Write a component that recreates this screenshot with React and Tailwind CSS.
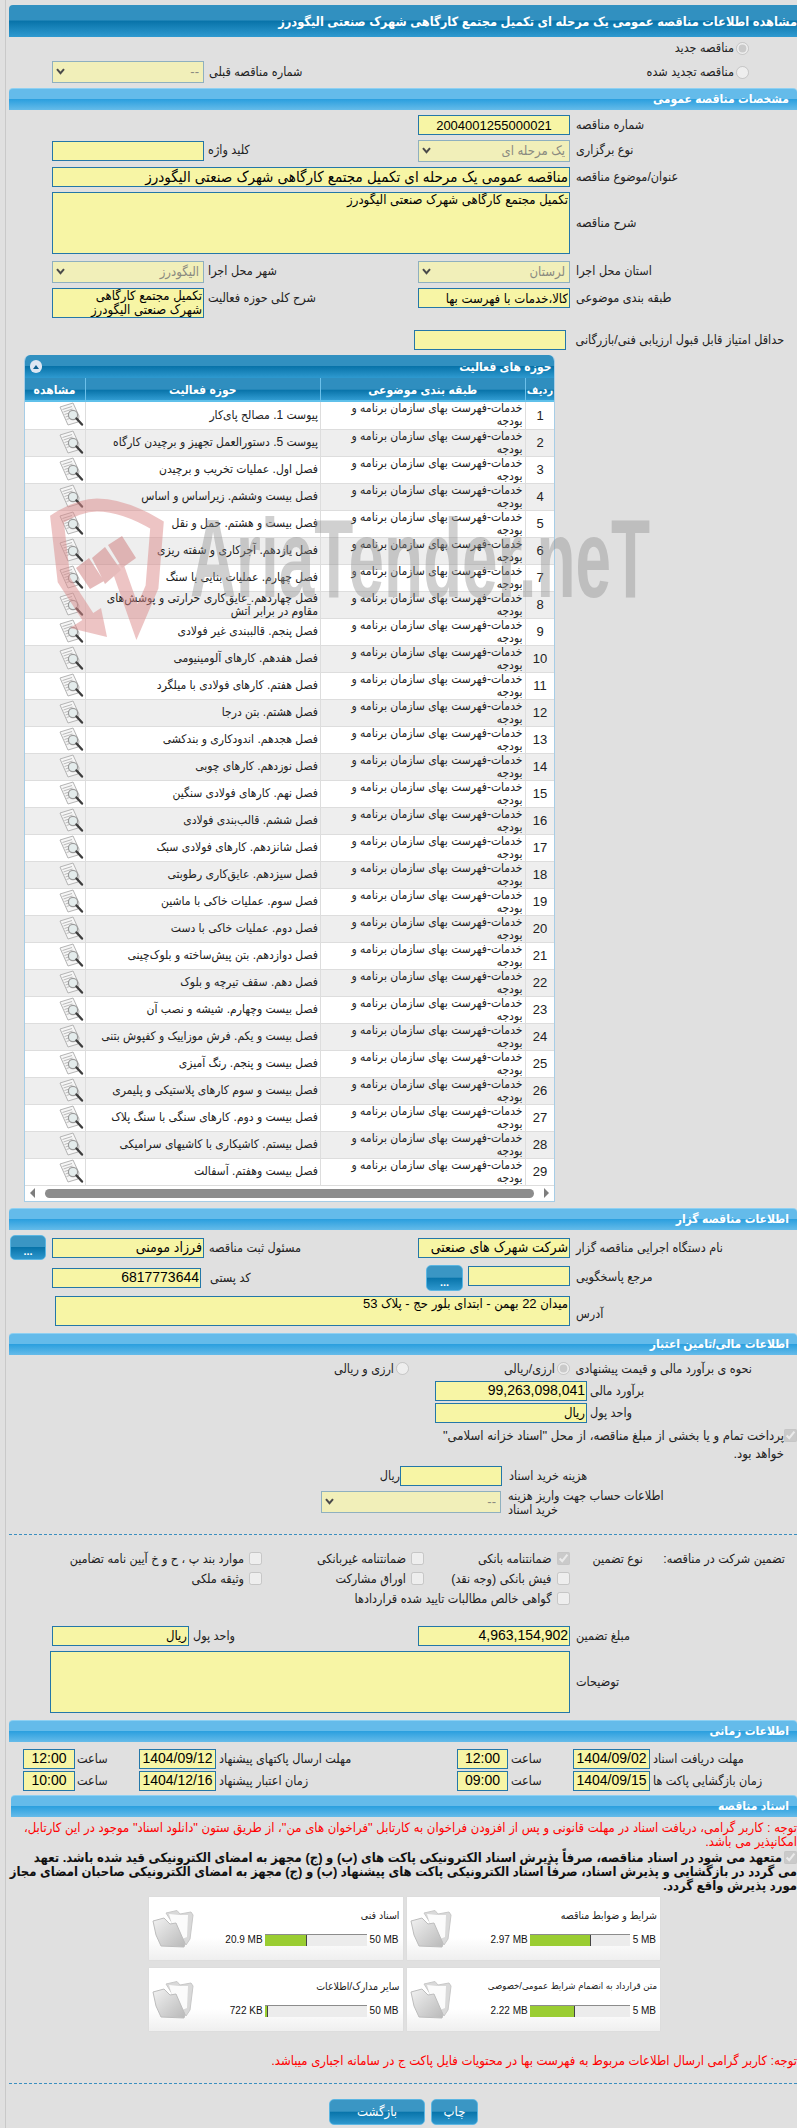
import React from "react";

const ROWS = [
  "پیوست 1. مصالح پای‌کار",
  "پیوست 5. دستورالعمل تجهیز و برچیدن کارگاه",
  "فصل اول. عملیات تخریب و برچیدن",
  "فصل بیست وششم. زیراساس و اساس",
  "فصل بیست و هشتم. حمل و نقل",
  "فصل یازدهم. آجرکاری و شفته ریزی",
  "فصل چهارم. عملیات بنایی با سنگ",
  "فصل چهاردهم. عایق‌کاری حرارتی و پوشش‌های مقاوم در برابر آتش",
  "فصل پنجم. قالببندی غیر فولادی",
  "فصل هفدهم. کارهای آلومینیومی",
  "فصل هفتم. کارهای فولادی با میلگرد",
  "فصل هشتم. بتن درجا",
  "فصل هجدهم. اندودکاری و بندکشی",
  "فصل نوزدهم. کارهای چوبی",
  "فصل نهم. کارهای فولادی سنگین",
  "فصل ششم. قالب‌بندی فولادی",
  "فصل شانزدهم. کارهای فولادی سبک",
  "فصل سیزدهم. عایق‌کاری رطوبتی",
  "فصل سوم. عملیات خاکی با ماشین",
  "فصل دوم. عملیات خاکی با دست",
  "فصل دوازدهم. بتن پیش‌ساخته و بلوک‌چینی",
  "فصل دهم. سقف تیرچه و بلوک",
  "فصل بیست وچهارم. شیشه و نصب آن",
  "فصل بیست و یکم. فرش موزاییک و کفپوش بتنی",
  "فصل بیست و پنجم. رنگ آمیزی",
  "فصل بیست و سوم کارهای پلاستیکی و پلیمری",
  "فصل بیست و دوم. کارهای سنگی با سنگ پلاک",
  "فصل بیستم. کاشیکاری با کاشیهای سرامیکی",
  "فصل بیست وهفتم. آسفالت",
];

const fieldClass =
  "block border border-[#2477a8] bg-[#f7f5a5] text-black outline-none px-px";

function Input({ value = "", className = "", center }) {
  return (
    <input
      readOnly
      dir="rtl"
      value={value}
      className={`${fieldClass} h-5 ${center ? "text-center" : ""} ${className.includes("text-[") ? "" : "text-[13px]"} ${className}`}
    />
  );
}

function Area({ value = "", className = "" }) {
  return (
    <textarea
      readOnly
      dir="rtl"
      value={value}
      className={`${fieldClass} resize-none overflow-hidden text-[13px] leading-[14px] ${className}`}
    />
  );
}

function Select({ value, className = "w-[152px]" }) {
  return (
    <span className={`relative block h-[22px] ${className}`}>
      <select
        disabled
        dir="rtl"
        className="block h-[22px] w-full appearance-none border border-[#8fb0bf] bg-[#f1efb9] pr-1 text-[13px] text-[#8a8a80]"
      >
        <option>{value}</option>
      </select>
      <svg width="9" height="7" viewBox="0 0 9 7" className="absolute left-[4px] top-[7px]">
        <path d="M1 1.2 4.5 5.2 8 1.2" fill="none" stroke="#4a4a4a" strokeWidth="2" />
      </svg>
    </span>
  );
}

function Label({ children, className = "" }) {
  return (
    <span dir="rtl" className={`block w-max text-[12.5px] leading-5 text-[#222] ${className}`}>
      {children}
    </span>
  );
}

function Section({ title, className = "" }) {
  return (
    <div
      dir="rtl"
      className={`h-[22px] rounded-t-[4px] border-t border-[#8ed0f2] bg-[linear-gradient(to_bottom,#64bbea_0%,#64bbea_48%,#2ca0df_50%,#65bbe9_100%)] pr-2 text-[12px] font-bold leading-[20px] text-white ${className}`}
    >
      {title}
    </div>
  );
}

function Grid({ left, leftLabel, right, rightLabel, className = "" }) {
  return (
    <div className={`grid grid-cols-[152px_214px_152px_1fr] pl-[43px] ${className}`}>
      <div>{left}</div>
      <div>{leftLabel && <Label className="ml-1">{leftLabel}</Label>}</div>
      <div>{right}</div>
      <div>{rightLabel && <Label className="ml-[6px]">{rightLabel}</Label>}</div>
    </div>
  );
}

function Radio({ checked, children }) {
  return (
    <span className="flex items-center gap-[2px]">
      <span dir="rtl" className="text-[12.5px] leading-5 text-[#222]">{children}</span>
      <input type="radio" disabled checked={!!checked} readOnly className="m-0 size-[13px]" />
    </span>
  );
}

function Check({ checked, children }) {
  return (
    <span className="flex items-center gap-[5px]">
      <input type="checkbox" disabled checked={!!checked} readOnly className="m-0 size-[13px] shrink-0" />
      <span className="whitespace-nowrap text-[12.5px] leading-5 text-[#222]">{children}</span>
    </span>
  );
}

function BlueButton({ children, className = "" }) {
  return (
    <button
      type="button"
      className={`rounded-[5px] border border-[#5cb6e2] bg-[linear-gradient(to_bottom,#3a96c4_0%,#3a96c4_47%,#0874aa_50%,#2e97cd_100%)] text-white ${className}`}
    >
      {children}
    </button>
  );
}

function ViewIcon() {
  return (
    <svg width="25" height="25" viewBox="0 0 25 25" className="block">
      <path d="M1 5 14 1l6 13-1 6-10 3z" fill="#f6f6f6" stroke="#b4b4b4" strokeWidth="1" />
      <path d="M3.5 7.5 13 4.5M4.5 10l9-3M5.5 12.5l4-1.3M6.5 15l3-1M7.5 17.5l3-1" stroke="#b9b9b9" strokeWidth="1" />
      <circle cx="14" cy="13" r="4.6" fill="#e4ecec" stroke="#9a9a9a" strokeWidth="1.2" />
      <path d="m17.5 16.5 5.5 6" stroke="#3d3d3d" strokeWidth="2.4" strokeLinecap="round" />
    </svg>
  );
}

function FolderIcon() {
  return (
    <svg width="42" height="38" viewBox="0 0 42 38" className="block">
      <defs>
        <linearGradient id="folderBack" x1="0" y1="0" x2="1" y2="1">
          <stop offset="0" stopColor="#f2f2f2" />
          <stop offset="1" stopColor="#b9b9b9" />
        </linearGradient>
      </defs>
      <path d="M14 3 25 .5l3 3.5 11-2 2 3-3 24-4 6z" fill="#d9d9d9" stroke="#c8c8c8" />
      <path d="M17 4 27 5l9 0-1 22-10 4z" fill="#fbfbfb" />
      <path d="M1 11 12 8l6 6 6-1 9 20.5-1 3.5-23-1L4 25z" fill="url(#folderBack)" stroke="#bdbdbd" />
    </svg>
  );
}

function DocCard({ title, used, max, fill, barClass, titleClass = "text-[10.5px]" }) {
  return (
    <div className="flex h-[63px] w-[253.5px] bg-[linear-gradient(to_bottom,#ffffff_0%,#ffffff_65%,#efefef_100%)] shadow-[0_0_1px_#cccccc]">
      <div className="ml-[3px] mt-[13px]">
        <FolderIcon />
      </div>
      <div className="flex flex-1 flex-col">
        <div dir="rtl" className={`mt-[11px] h-[14px] pr-[3px] leading-[14px] whitespace-nowrap text-[#222] ${titleClass}`}>{title}</div>
        <div className="mt-[12px] flex items-center justify-end pr-1 text-[10px] leading-3 text-[#111]">
          <span className="mr-[2px] whitespace-nowrap">{used}</span>
          <span className={`h-3 border-t border-[#8c8c8c] bg-[#ececec] ${barClass}`}>
            <span className="block h-[11px] border-r border-[#444] bg-[#9acd32]" style={{ width: fill }} />
          </span>
          <span className="ml-[3px] whitespace-nowrap">{max}</span>
        </div>
      </div>
    </div>
  );
}

function Watermark() {
  return (
    <div className="pointer-events-none absolute left-[45px] top-[495px] h-[150px] w-[620px]">
      <svg width="125" height="150" viewBox="0 0 125 150" className="absolute left-0 top-0 opacity-50">
        <path
          d="M47 128 19 85 12 24C28 14 40 10 52 10 72 10 92 18 112 30L107 92 92 127 72 70"
          fill="none"
          stroke="#dc8a8a"
          strokeWidth="13"
        />
        <path d="M25 133 62 142 56 113z" fill="#dc8a8a" />
        <path d="M63 50 77 41 91 63 77 73zM47 63 60 52 76 75 60 89zM31 73 44 63 59 86 45 94z" fill="#cf7a7a" />
      </svg>
      <div className="absolute left-[145px] top-[4px] origin-top-left scale-x-[0.57] whitespace-nowrap text-[112px] font-bold leading-[120px] text-[#8c8c8c] opacity-40">
        AriaTender.neT
      </div>
    </div>
  );
}

export default function App() {
  return (
    <div className="relative min-h-[2128px] w-[797px] overflow-hidden bg-[#e0e0e0] pl-[5px] font-['Liberation_Sans','DejaVu_Sans_Condensed',sans-serif]">
      <div className="min-h-[2128px] border-l border-[#c9c9c9] pl-[3px]">
        <div className="pt-[5px]">
          <div
            dir="rtl"
            className="h-8 overflow-hidden rounded-tl-[4px] bg-[linear-gradient(to_bottom,#3190c0_0%,#3190c0_47%,#0873a9_50%,#2f9ad0_100%)] text-[12.7px] font-bold leading-[34px] whitespace-nowrap text-white"
          >
            مشاهده اطلاعات مناقصه عمومی یک مرحله ای تکمیل مجتمع کارگاهی شهرک صنعتی الیگودرز
          </div>
        </div>

        <div className="mt-[1px] flex h-5 justify-end pr-[48px]">
          <Radio checked>مناقصه جدید</Radio>
        </div>

        <div className="mt-[3px] flex h-[22px] items-center pl-[43px] pr-[48px]">
          <Select value="--" />
          <Label className="ml-[5px]">شماره مناقصه قبلی</Label>
          <span className="ml-auto">
            <Radio>مناقصه تجدید شده</Radio>
          </span>
        </div>

        <Section title="مشخصات مناقصه عمومی" className="mt-[5px]" />

        <Grid
          className="mt-[5px]"
          right={<Input value="2004001255000021" center className="w-full" />}
          rightLabel="شماره مناقصه"
        />
        <Grid
          className="mt-[5px]"
          left={<Input className="mt-px w-full" />}
          leftLabel="کلید واژه"
          right={<Select value="یک مرحله ای" className="w-full" />}
          rightLabel="نوع برگزاری"
        />
        <div className="mt-[5px] flex pl-[43px]">
          <Input
            className="w-[518px] text-[15px]"
            value="مناقصه عمومی یک مرحله ای تکمیل مجتمع کارگاهی شهرک صنعتی الیگودرز"
          />
          <Label className="ml-[6px]">عنوان/موضوع مناقصه</Label>
        </div>
        <div className="mt-[5px] flex items-center pl-[43px]">
          <Area className="h-[62px] w-[518px]" value="تکمیل مجتمع کارگاهی شهرک صنعتی الیگودرز" />
          <Label className="ml-[6px]">شرح مناقصه</Label>
        </div>
        <Grid
          className="mt-[7px]"
          left={<Select value="الیگودرز" className="w-full" />}
          leftLabel="شهر محل اجرا"
          right={<Select value="لرستان" className="w-full" />}
          rightLabel="استان محل اجرا"
        />
        <Grid
          className="mt-[5px]"
          left={<Area className="h-[30px] w-full" value={"تکمیل مجتمع کارگاهی\nشهرک صنعتی الیگودرز"} />}
          leftLabel="شرح کلی حوزه فعالیت"
          right={<Input className="w-full" value="کالا،خدمات با فهرست بها" />}
          rightLabel="طبقه بندی موضوعی"
        />
        <div className="mt-[12px] flex items-center pl-[405px]">
          <Input className="w-[152px]" />
          <Label className="ml-[9.5px]">حداقل امتیاز قابل قبول ارزیابی فنی/بازرگانی</Label>
        </div>

        <div className="relative ml-[14.5px] mt-[5px] w-[531px] overflow-hidden rounded-t-[6px] border border-t-0 border-[#a7cde6] bg-white">
          <div
            dir="rtl"
            className="flex h-[23px] items-center justify-between bg-[linear-gradient(to_bottom,#3190c0_0%,#3190c0_47%,#0873a9_50%,#2f9ad0_100%)] pl-[5px] pr-[2px] text-[12px] font-bold text-white"
          >
            <span>حوزه های فعالیت</span>
            <span className="flex size-[12.5px] items-center justify-center rounded-full bg-[#dde6f2]">
              <span className="h-0 w-0 border-x-[3px] border-b-[4px] border-x-transparent border-b-[#0d5f90]" />
            </span>
          </div>
          <table dir="rtl" className="w-[530px] table-fixed border-collapse">
            <colgroup>
              <col className="w-[29.5px]" />
              <col className="w-[204.5px]" />
              <col className="w-[235.5px]" />
              <col className="w-[60.5px]" />
            </colgroup>
            <thead>
              <tr className="h-6 bg-[linear-gradient(to_bottom,#2f8ebf_0%,#2f8ebf_47%,#0873a9_50%,#2f9ad0_90%,#5fc0ea_92%)] text-[12px] font-bold text-white">
                <th className="whitespace-nowrap border-l border-[#6cc0ea] p-0 text-[11px] font-bold">ردیف</th>
                <th className="border-l border-[#6cc0ea] p-0 font-bold">طبقه بندی موضوعی</th>
                <th className="border-l border-[#6cc0ea] p-0 font-bold">حوزه فعالیت</th>
                <th className="p-0 font-bold">مشاهده</th>
              </tr>
            </thead>
            <tbody>
              {ROWS.map((activity, i) => (
                <tr key={i} className={`h-[27px] border-b border-[#dddddd] ${i % 2 ? "bg-[#eeeeee]" : "bg-white"}`}>
                  <td className="border-l border-[#dddddd] p-0 text-center text-[13px] leading-[13px] text-[#222]">{i + 1}</td>
                  <td className="border-l border-[#dddddd] p-0 pl-[24px] pr-[2px] text-[12px] leading-[13px] text-[#222]">
                    خدمات-فهرست بهای سازمان برنامه و بودجه
                  </td>
                  <td className="border-l border-[#dddddd] p-0 pl-[14px] pr-[2px] text-[12px] leading-[13px] text-[#222]">{activity}</td>
                  <td className="p-0">
                    <span className="block h-[26px] overflow-hidden pl-[34px]" dir="ltr">
                      <ViewIcon />
                    </span>
                  </td>
                </tr>
              ))}
            </tbody>
          </table>
          <div className="flex h-[15px] items-center px-[5px]">
            <span className="h-0 w-0 border-y-[5px] border-r-[5px] border-y-transparent border-r-[#7d7d7d]" />
            <span className="mx-[10px] h-[9px] flex-1 rounded-full bg-[#8c8c8c]" />
            <span className="h-0 w-0 border-y-[5px] border-l-[5px] border-y-transparent border-l-[#7d7d7d]" />
          </div>
        </div>

        <Section title="اطلاعات مناقصه گزار" className="mt-[6px]" />

        <div className="mt-[5px] flex pl-px">
          <BlueButton className="h-[25px] w-[36px] pt-2 text-[11px] font-bold leading-3">...</BlueButton>
          <div className="ml-[6px] mt-[3px]">
            <Input className="w-[152px] text-[14px]" value="فرزاد مومنی" />
          </div>
          <div className="mt-[3px] w-[214px]">
            <Label className="ml-[5px]">مسئول ثبت مناقصه</Label>
          </div>
          <div className="mt-[3px]">
            <Input className="w-[152px] text-[14px]" value="شرکت شهرک های صنعتی" />
          </div>
          <Label className="ml-[6px] mt-[3px]">نام دستگاه اجرایی مناقصه گزار</Label>
        </div>

        <div className="mt-[5px] flex pl-[43px]">
          <Input className="mt-[3px] w-[149px] text-[14px]" value="6817773644" />
          <div className="mt-[3px] w-[225px]">
            <Label className="ml-[9px]">کد پستی</Label>
          </div>
          <BlueButton className="h-[26px] w-[37px] pt-2 text-[11px] font-bold leading-3">...</BlueButton>
          <Input className="ml-[5px] mt-px w-[102px]" />
          <Label className="ml-[6px] mt-[2px]">مرجع پاسخگویی</Label>
        </div>

        <div className="mt-[5px] flex pl-[46px]">
          <Area className="h-[30px] w-[515px]" value="میدان 22 بهمن - ابتدای بلور حج - پلاک 53" />
          <Label className="ml-[6px] mt-[8px]">آدرس</Label>
        </div>

        <Section title="اطلاعات مالی/تامین اعتبار" className="mt-[7px]" />

        <div className="mt-[4px] flex h-5 items-center">
          <span className="flex w-[400px] justify-end">
            <Radio>ارزی و ریالی</Radio>
          </span>
          <span className="flex w-[161px] justify-end">
            <Radio checked>ارزی/ریالی</Radio>
          </span>
          <Label className="ml-[5.5px]">نحوه ی برآورد مالی و قیمت پیشنهادی</Label>
        </div>
        <div className="mt-[2px] flex pl-[426px]">
          <Input className="w-[152px] text-[14px]" value="99,263,098,041" />
          <Label className="ml-[3px]">برآورد مالی</Label>
        </div>
        <div className="mt-[2px] flex pl-[426px]">
          <Input className="w-[152px]" value="ریال" />
          <Label className="ml-[3px]">واحد پول</Label>
        </div>

        <div dir="rtl" className="mt-[4px] flex items-start">
          <input type="checkbox" disabled checked readOnly className="m-0 mt-[2px] size-[13px] shrink-0" />
          <p className="text-[13px] leading-[18px] text-[#222]">
            پرداخت تمام و یا بخشی از مبلغ مناقصه، از محل "اسناد خزانه اسلامی"
            <br />
            خواهد بود.
          </p>
        </div>

        <div className="mt-[3px] flex pl-[372px]">
          <span dir="rtl" className="w-[19px] text-[12.5px] leading-5 text-[#222]">ریال</span>
          <Input className="w-[102px]" />
          <Label className="ml-[7px]">هزینه خرید اسناد</Label>
        </div>
        <div className="mt-[3px] flex pl-[312px]">
          <Select value="--" className="mt-[2px] w-[180px]" />
          <span dir="rtl" className="ml-[7px] block w-[170px] text-left text-[12.5px] leading-[14px] text-[#222]">
            اطلاعات حساب جهت واریز هزینه خرید اسناد
          </span>
        </div>

        <div className="mt-[17px] border-t border-dashed border-[#3a8fc0]" />

        <div dir="rtl" className="mt-[14px] grid grid-cols-[142px_73.5px_145.5px_162px_1fr] pr-[12px]">
          <Label>تضمین شرکت در مناقصه:</Label>
          <Label>نوع تضمین</Label>
          <Check checked>ضمانتنامه بانکی</Check>
          <Check>ضمانتنامه غیربانکی</Check>
          <Check>موارد بند پ ، ح و خ آیین نامه تضامین</Check>
          <span className="col-start-3">
            <Check>فیش بانکی (وجه نقد)</Check>
          </span>
          <Check>اوراق مشارکت</Check>
          <Check>وثیقه ملکی</Check>
          <span className="col-span-3 col-start-3">
            <Check>گواهی خالص مطالبات تایید شده قراردادها</Check>
          </span>
        </div>

        <div className="mt-[17px] flex pl-[43px]">
          <Input className="w-[137px]" value="ریال" />
          <div className="w-[229px]">
            <Label className="ml-[4px]">واحد پول</Label>
          </div>
          <Input className="w-[152px] text-[14px]" value="4,963,154,902" />
          <Label className="ml-[6px]">مبلغ تضمین</Label>
        </div>
        <div className="mt-[5px] flex items-center pl-[41px]">
          <Area className="h-[62px] w-[520px]" />
          <Label className="ml-[6px]">توضیحات</Label>
        </div>

        <Section title="اطلاعات زمانی" className="mt-[7px]" />

        <div className="mt-[7px] flex pl-[14px]">
          <Input className="w-[52px] text-[14px]" value="12:00" center />
          <div className="w-[64px]"><Label className="ml-[2px]">ساعت</Label></div>
          <Input className="w-[77px] text-[14px]" value="1404/09/12" center />
          <div className="w-[241px]"><Label className="ml-[3px]">مهلت ارسال پاکتهای پیشنهاد</Label></div>
          <Input className="w-[51px] text-[14px]" value="12:00" center />
          <div className="w-[65px]"><Label className="ml-[3px]">ساعت</Label></div>
          <Input className="w-[77px] text-[14px]" value="1404/09/02" center />
          <Label className="ml-[3px]">مهلت دریافت اسناد</Label>
        </div>
        <div className="mt-[2px] flex pl-[14px]">
          <Input className="w-[52px] text-[14px]" value="10:00" center />
          <div className="w-[64px]"><Label className="ml-[2px]">ساعت</Label></div>
          <Input className="w-[77px] text-[14px]" value="1404/12/16" center />
          <div className="w-[241px]"><Label className="ml-[3px]">زمان اعتبار پیشنهاد</Label></div>
          <Input className="w-[51px] text-[14px]" value="09:00" center />
          <div className="w-[65px]"><Label className="ml-[3px]">ساعت</Label></div>
          <Input className="w-[77px] text-[14px]" value="1404/09/15" center />
          <Label className="ml-[3px]">زمان بازگشایی پاکت ها</Label>
        </div>

        <Section title="اسناد مناقصه" className="ml-[2px] mt-[4px]" />

        <p dir="rtl" className="mt-[4px] text-[13px] leading-[14px] text-[#ff0000]">
          توجه : کاربر گرامی، دریافت اسناد در مهلت قانونی و پس از افزودن فراخوان به کارتابل "فراخوان های من"، از طریق ستون "دانلود اسناد" موجود در این کارتابل،
          <br />
          امکانپذیر می باشد.
        </p>

        <div dir="rtl" className="mt-[2px] flex items-start">
          <input type="checkbox" disabled checked readOnly className="m-0 size-[13px] shrink-0" />
          <p className="mr-[2px] text-[13px] font-bold leading-[14px] text-[#111]">
            متعهد می شود در اسناد مناقصه، صرفاً پذیرش اسناد الکترونیکی پاکت های (ب) و (ج) مجهز به امضای الکترونیکی قید شده باشد. تعهد
          </p>
        </div>
        <p dir="rtl" className="text-[13px] font-bold leading-[14px] text-[#111]">
          می گردد در بازگشایی و پذیرش اسناد، صرفاً اسناد الکترونیکی پاکت های پیشنهاد (ب) و (ج) مجهز به امضای الکترونیکی صاحبان امضای مجاز مورد پذیرش واقع گردد.
        </p>

        <div className="mt-[4px] flex flex-col gap-2 pl-[140px]">
          <div className="flex gap-[4px]">
            <DocCard title="اسناد فنی" used="20.9 MB" max="50 MB" fill="42%" barClass="w-[102px]" />
            <DocCard title="شرایط و ضوابط مناقصه" used="2.97 MB" max="5 MB" fill="61%" barClass="w-[100px]" />
          </div>
          <div className="flex gap-[4px]">
            <DocCard title="سایر مدارک/اطلاعات" used="722 KB" max="50 MB" fill="3%" barClass="w-[102px]" />
            <DocCard title="متن قرارداد به انضمام شرایط عمومی/خصوصی" used="2.22 MB" max="5 MB" fill="45.5%" barClass="w-[100px]" titleClass="text-[9.5px]" />
          </div>
        </div>

        <p dir="rtl" className="mt-[22px] text-[13px] leading-4 text-[#ff0000]">
          توجه: کاربر گرامی ارسال اطلاعات مربوط به فهرست بها در محتویات فایل پاکت ج در سامانه اجباری میباشد.
        </p>

        <div className="mt-[14px] border-t border-dashed border-[#3a8fc0]" />

        <div className="mt-[15px] flex gap-[6px] pl-[320px]">
          <BlueButton className="h-[26px] w-[96px] text-[13px]">بازگشت</BlueButton>
          <BlueButton className="h-[26px] w-[47px] text-[13px]">چاپ</BlueButton>
        </div>
      </div>
      <Watermark />
    </div>
  );
}
